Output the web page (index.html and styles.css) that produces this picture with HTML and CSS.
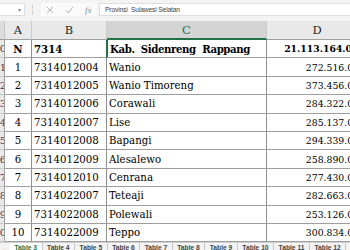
FILE: index.html
```html
<!DOCTYPE html>
<html lang="en">
<head>
    <meta charset="UTF-8">
    <title>Table 3</title>
    <link rel="stylesheet" href="styles.css">
</head>
<body>
    <div class="formula-bar">
        <div class="name-box"><span class="drop">&#9662;</span></div>
        <div class="grip"></div>
        <div class="fx-tools">
            <svg class="tool" width="8" height="8" viewBox="0 0 8 8"><path d="M1 1L7 7M7 1L1 7" stroke="#a8a8a8" stroke-width="0.9" fill="none"/></svg>
            <svg class="tool" width="9" height="8" viewBox="0 0 9 8"><path d="M1 4.2L3.4 6.8L8 1" stroke="#a8a8a8" stroke-width="0.9" fill="none"/></svg>
            <span class="fx">fx</span>
        </div>
        <div class="formula-input">Provinsi  Sulawesi Selatan</div>
    </div>

    <div class="sheet">
        <div class="corner"></div>
        <div class="col-head">A</div>
        <div class="col-head">B</div>
        <div class="col-head selected">C</div>
        <div class="col-head">D</div>

        <div class="row-head"><span>10</span></div>
        <div class="cell num bold">N</div>
        <div class="cell bold">7314</div>
        <div class="cell bold active">Kab.  Sidenreng  Rappang</div>
        <div class="cell amount bold">21.113.164.000</div>

        <div class="row-head"><span>11</span></div>
        <div class="cell num">1</div>
        <div class="cell">7314012004</div>
        <div class="cell">Wanio</div>
        <div class="cell amount">272.516.000</div>

        <div class="row-head"><span>12</span></div>
        <div class="cell num">2</div>
        <div class="cell">7314012005</div>
        <div class="cell">Wanio Timoreng</div>
        <div class="cell amount">373.456.000</div>

        <div class="row-head"><span>13</span></div>
        <div class="cell num">3</div>
        <div class="cell">7314012006</div>
        <div class="cell">Corawali</div>
        <div class="cell amount">284.322.000</div>

        <div class="row-head"><span>14</span></div>
        <div class="cell num">4</div>
        <div class="cell">7314012007</div>
        <div class="cell">Lise</div>
        <div class="cell amount">285.137.000</div>

        <div class="row-head"><span>15</span></div>
        <div class="cell num">5</div>
        <div class="cell">7314012008</div>
        <div class="cell">Bapangi</div>
        <div class="cell amount">294.339.000</div>

        <div class="row-head"><span>16</span></div>
        <div class="cell num">6</div>
        <div class="cell">7314012009</div>
        <div class="cell">Alesalewo</div>
        <div class="cell amount">258.890.000</div>

        <div class="row-head"><span>17</span></div>
        <div class="cell num">7</div>
        <div class="cell">7314012010</div>
        <div class="cell">Cenrana</div>
        <div class="cell amount">277.430.000</div>

        <div class="row-head"><span>18</span></div>
        <div class="cell num">8</div>
        <div class="cell">7314022007</div>
        <div class="cell">Teteaji</div>
        <div class="cell amount">282.663.000</div>

        <div class="row-head"><span>19</span></div>
        <div class="cell num">9</div>
        <div class="cell">7314022008</div>
        <div class="cell">Polewali</div>
        <div class="cell amount">253.126.000</div>

        <div class="row-head"><span>20</span></div>
        <div class="cell num">10</div>
        <div class="cell">7314022009</div>
        <div class="cell">Teppo</div>
        <div class="cell amount">300.834.000</div>
    </div>

    <div class="tabs">
        <div class="tab-more">...</div>
        <div class="tab current">Table 3</div>
        <div class="tab">Table 4</div>
        <div class="tab">Table 5</div>
        <div class="tab">Table 6</div>
        <div class="tab">Table 7</div>
        <div class="tab">Table 8</div>
        <div class="tab">Table 9</div>
        <div class="tab">Table 10</div>
        <div class="tab">Table 11</div>
        <div class="tab">Table 12</div>
    </div>
</body>
</html>
```

FILE: styles.css
```css
* {
    box-sizing: border-box;
}
body {
    margin: 0;
    width: 350px;
    height: 250px;
    overflow: hidden;
    background: #fff;
    font-family: 'DejaVu Serif', serif;
    color: #000;
}
.formula-bar {
    display: flex;
    align-items: center;
    height: 21px;
    padding-bottom: 2px;
    background: #f3f3f3;
}
.name-box {
    width: 25px;
    height: 13px;
    background: #fff;
    border: 1px solid #dedede;
    border-left: none;
    display: flex;
    align-items: center;
    justify-content: flex-end;
    padding-right: 3px;
}
.drop {
    font-family: 'DejaVu Sans', sans-serif;
    font-size: 6px;
    color: #8a8a8a;
}
.grip {
    width: 1px;
    height: 9px;
    margin: 0 8px 0 7px;
    border-left: 1px dotted #b5b5b5;
}
.fx-tools {
    width: 56px;
    height: 13px;
    background: #fafafa;
    display: flex;
    align-items: center;
    padding-left: 5px;
    gap: 11px;
}
.fx {
    font-family: 'Liberation Serif', serif;
    font-style: italic;
    font-size: 9px;
    color: #8a8a8a;
}
.formula-input {
    flex: 1;
    height: 13px;
    margin-left: 2px;
    padding-left: 5px;
    background: #fff;
    border: 1px solid #dedede;
    border-right: none;
    font-family: 'Liberation Sans', sans-serif;
    font-size: 6.7px;
    letter-spacing: -0.15px;
    line-height: 11px;
    color: #444;
    white-space: pre;
}
.sheet {
    display: grid;
    grid-template-columns: 5px 27px 75px 160px 101px;
    grid-template-rows: 19px repeat(11, 18.4px);
}
.corner {
    background: #dcdcdc;
    border-right: 1px solid #c4c4c4;
    border-bottom: 1px solid #9e9e9e;
}
.col-head {
    display: flex;
    align-items: center;
    justify-content: center;
    background: #e9e9e9;
    border-right: 1px solid #cacaca;
    border-bottom: 1px solid #9e9e9e;
    font-size: 11.5px;
    color: #262626;
}
.col-head.selected {
    background: #d4d4d4;
    color: #217346;
    border-bottom: 2px solid #217346;
}
.row-head {
    display: flex;
    align-items: center;
    justify-content: flex-end;
    overflow: hidden;
    background: #e9e9e9;
    border-right: 1px solid #9e9e9e;
    border-bottom: 1px solid #cacaca;
    font-size: 10px;
    color: #3a3a5a;
}
.row-head span {
    margin-right: -2px;
}
.cell {
    display: flex;
    align-items: center;
    padding: 0 2px;
    border-right: 1px solid #8f8f8f;
    border-bottom: 1px solid #9e9e9e;
    font-size: 10.2px;
    white-space: pre;
    overflow: hidden;
}
.cell.num {
    justify-content: center;
}
.cell.amount {
    justify-content: flex-end;
    font-size: 9.3px;
}
.cell.bold {
    font-weight: bold;
}
.cell.active {
    border-left: 2px solid #217346;
    margin-left: -1px;
    letter-spacing: -0.4px;
}
.tabs {
    display: flex;
    align-items: center;
    height: 12px;
    margin-top: -0.4px;
    background: #f3f3f3;
    border-top: 1px solid #d0d0d0;
    font-family: 'Liberation Sans', sans-serif;
    font-size: 6.7px;
    font-weight: bold;
    color: #444;
}
.tab-more {
    width: 10px;
    padding-left: 2px;
    color: #217346;
}
.tab {
    padding: 0 4.5px;
    line-height: 10px;
    border-right: 1px solid #c6c6c6;
}
.tab.current {
    background: #fff;
    color: #217346;
}
```
